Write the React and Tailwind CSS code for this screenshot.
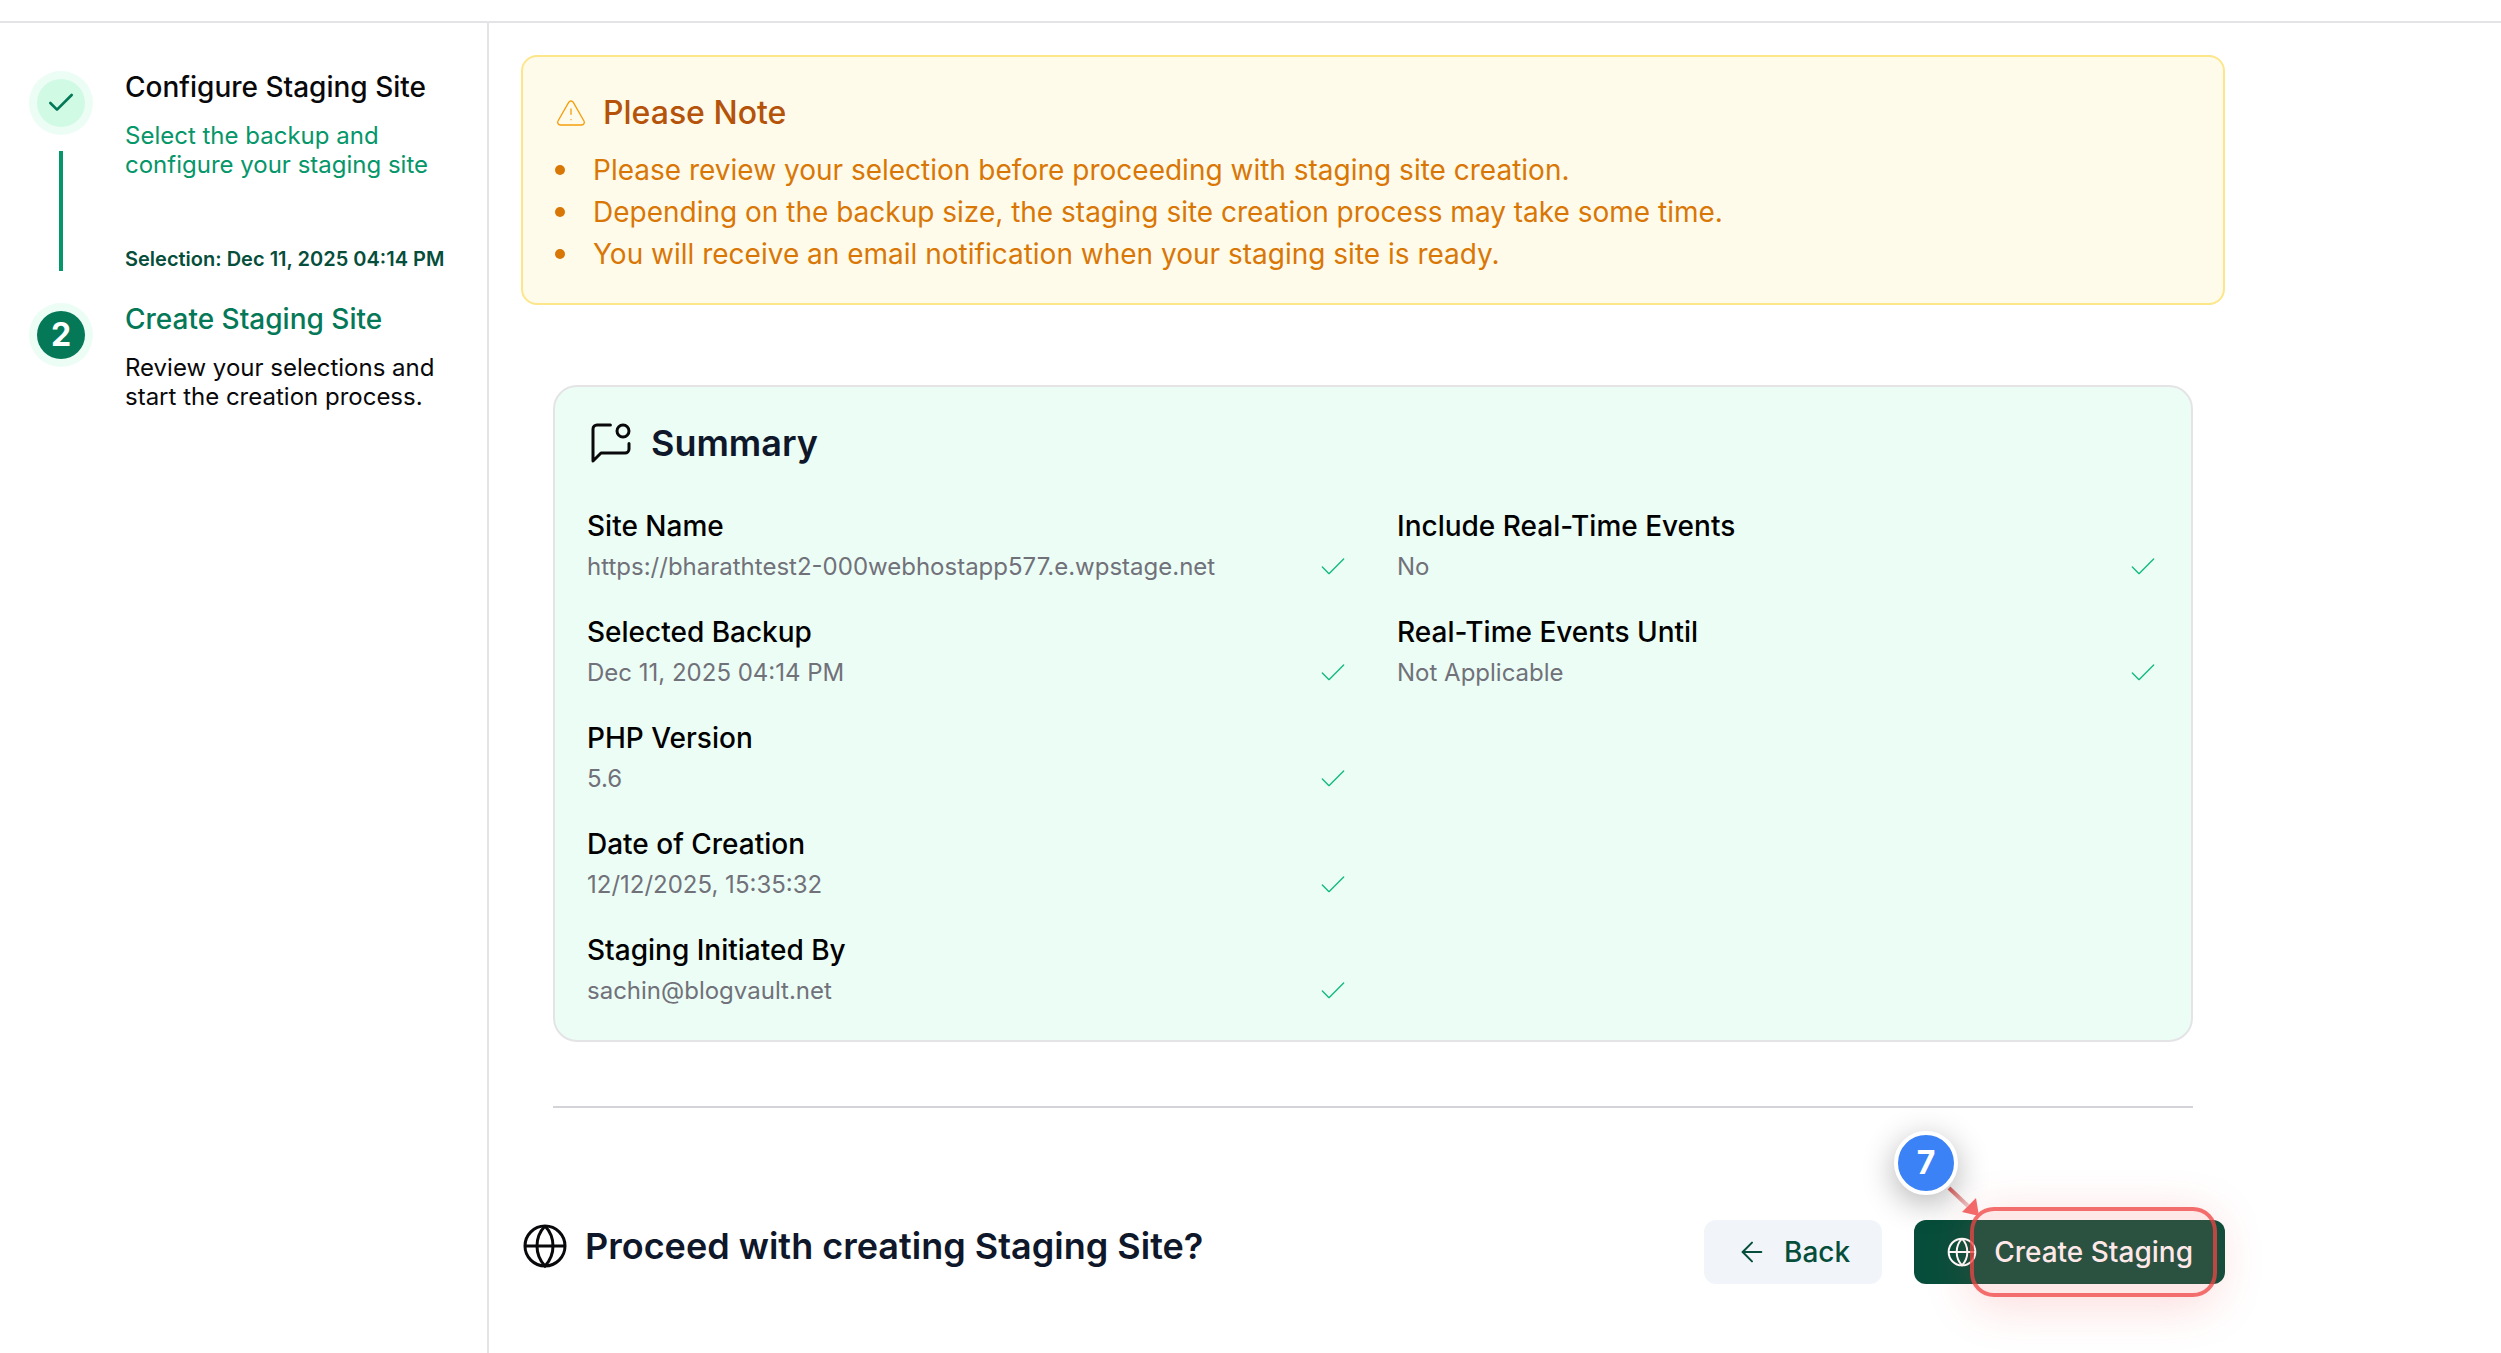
import { ArrowLeft, Check, TriangleAlert } from 'lucide-react';

const notes = [
  'Please review your selection before proceeding with staging site creation.',
  'Depending on the backup size, the staging site creation process may take some time.',
  'You will receive an email notification when your staging site is ready.',
];

const siteDetails = [
  { label: 'Site Name', value: 'https://bharathtest2-000webhostapp577.e.wpstage.net' },
  { label: 'Selected Backup', value: 'Dec 11, 2025 04:14 PM' },
  { label: 'PHP Version', value: '5.6' },
  { label: 'Date of Creation', value: '12/12/2025, 15:35:32' },
  { label: 'Staging Initiated By', value: 'sachin@blogvault.net' },
];

const eventDetails = [
  { label: 'Include Real-Time Events', value: 'No' },
  { label: 'Real-Time Events Until', value: 'Not Applicable' },
];

// Globe with meridians that meet at the poles
function GlobeIcon({ className }) {
  return (
    <svg viewBox="0 0 24 24" fill="none" stroke="currentColor" strokeWidth="1.5" className={className} aria-hidden="true">
      <circle cx="12" cy="12" r="10" />
      <path d="M12 2a14.5 14.5 0 0 0 0 20 14.5 14.5 0 0 0 0-20" />
      <path d="M2 12h20" />
    </svg>
  );
}

function MessageDotIcon({ className }) {
  return (
    <svg
      viewBox="0 0 24 24"
      fill="none"
      stroke="currentColor"
      strokeWidth="1.5"
      strokeLinecap="round"
      strokeLinejoin="round"
      className={className}
      aria-hidden="true"
    >
      <path d="M11.7 3H5a2 2 0 0 0-2 2v16l4-4h12a2 2 0 0 0 2-2v-2.7" />
      <circle cx="18" cy="6" r="3" />
    </svg>
  );
}

function Stepper() {
  return (
    <ol>
      <li className="flex gap-8">
        <div className="flex flex-col items-center gap-4">
          <div className="mt-4 flex size-16 items-center justify-center rounded-full bg-emerald-50">
            <div className="flex size-12 items-center justify-center rounded-full bg-[#d1fae5] text-[#047857]">
              <Check className="size-8" strokeWidth={2} />
            </div>
          </div>
          <div className="h-[120px] w-1 bg-[#059669]" />
        </div>
        <div className="flex flex-col">
          <h2 className="mt-3 text-[28px] leading-10 font-medium text-zinc-950">Configure Staging Site</h2>
          <p className="mt-[14px] text-2xl leading-[29px] text-[#059669]">
            Select the backup and
            <br />
            configure your staging site
          </p>
          <p className="mt-auto text-xl leading-6 font-semibold text-[#064e3b]">Selection: Dec 11, 2025 04:14 PM</p>
        </div>
      </li>
      <li className="mt-4 flex gap-8">
        <div className="mt-4 flex size-16 shrink-0 items-center justify-center rounded-full bg-emerald-50">
          <div className="flex size-12 items-center justify-center rounded-full bg-[#047857] text-[32px] leading-none font-bold text-white">
            2
          </div>
        </div>
        <div>
          <h2 className="mt-3 text-[28px] leading-10 font-medium text-[#047857]">Create Staging Site</h2>
          <p className="mt-[14px] text-2xl leading-[29px] text-zinc-950">
            Review your selections and
            <br />
            start the creation process.
          </p>
        </div>
      </li>
    </ol>
  );
}

function NoteAlert() {
  return (
    <section className="rounded-2xl border-2 border-[#fde68a] bg-[#fffbeb] px-8 pt-8 pb-7">
      <div className="flex items-center gap-4">
        <TriangleAlert className="size-8 text-[#f59e0b]" strokeWidth={1} />
        <h2 className="text-[32px] leading-[48px] font-medium text-[#b45309]">Please Note</h2>
      </div>
      <ul className="mt-3 text-[28px] leading-[42px] text-[#d97706]">
        {notes.map((note) => (
          <li key={note} className="flex items-center gap-7">
            <span className="size-[10px] rounded-full bg-[#d97706]" />
            {note}
          </li>
        ))}
      </ul>
    </section>
  );
}

function DetailList({ items }) {
  return (
    <dl className="flex-1 space-y-6">
      {items.map(({ label, value }) => (
        <div key={label}>
          <dt className="text-[28px] leading-[42px] font-medium text-black">{label}</dt>
          <dd className="flex items-center justify-between text-2xl leading-10 text-[#71717a]">
            {value}
            <Check className="size-8 text-[#10b981]" strokeWidth={1} />
          </dd>
        </div>
      ))}
    </dl>
  );
}

function SummaryCard() {
  return (
    <section className="rounded-3xl border-2 border-[#e4e4e7] bg-emerald-50 px-8 pt-8 pb-[29px]">
      <div className="flex items-center gap-4">
        <MessageDotIcon className="size-12 text-zinc-950" />
        <h2 className="text-4xl leading-[48px] font-semibold text-[#0f172a]">Summary</h2>
      </div>
      <div className="mt-[38px] flex gap-12">
        <DetailList items={siteDetails} />
        <DetailList items={eventDetails} />
      </div>
    </section>
  );
}

// Walkthrough marker drawn over the primary action
function StepMarker() {
  return (
    <div className="pointer-events-none absolute -top-[13px] right-2 h-[90px] w-[247px] rounded-3xl border-4 border-[#ef4444]/75 bg-[#ff6464]/15 shadow-[0_8px_48px_rgba(239,68,68,0.2)]">
      <svg viewBox="0 0 40 40" className="absolute -top-7 -left-7 size-10" aria-hidden="true">
        <defs>
          <linearGradient id="marker-line" x1="3" y1="5" x2="22" y2="23" gradientUnits="userSpaceOnUse">
            <stop stopColor="#e26464" />
            <stop offset="1" stopColor="#ecc4c4" />
          </linearGradient>
        </defs>
        <path d="M3 5l19 18" stroke="url(#marker-line)" strokeWidth="4" />
        <path d="M30 15L16 29l17 4z" fill="#f56a6a" />
      </svg>
      <span className="absolute -top-20 -left-20 flex size-16 items-center justify-center rounded-full border-4 border-white bg-[#3b82f6] text-[32px] leading-none font-bold text-white shadow-[0_8px_32px_rgba(0,0,0,0.3)]">
        7
      </span>
    </div>
  );
}

export default function App() {
  return (
    <div className="flex min-h-screen flex-col bg-white font-[Inter,sans-serif]">
      <header className="h-[23px] border-b-2 border-[#e4e4e7]" />
      <div className="flex flex-1">
        <aside className="w-[489px] shrink-0 border-r-2 border-[#e4e4e7] pt-8 pl-[29px]">
          <Stepper />
        </aside>
        <main className="max-w-[1768px] flex-1 p-8">
          <NoteAlert />
          <div className="px-8 pt-20">
            <SummaryCard />
            <hr className="mt-16 border-t-2 border-[#d4d4d8]" />
          </div>
          <div className="mt-28 flex items-start justify-between">
            <div className="flex items-center gap-4">
              <GlobeIcon className="size-12 text-zinc-950" />
              <h2 className="text-4xl leading-[52px] font-semibold text-[#0f172a]">Proceed with creating Staging Site?</h2>
            </div>
            <div className="flex gap-8">
              <button className="flex h-16 items-center gap-4 rounded-xl bg-[#f1f5f9] px-8 text-[28px] font-medium text-[#064e3b]">
                <ArrowLeft className="size-8" strokeWidth={1.5} />
                Back
              </button>
              <div className="relative">
                <button className="flex h-16 items-center gap-4 rounded-xl bg-[#064e3b] px-8 text-[28px] font-medium text-white">
                  <GlobeIcon className="size-8" />
                  Create Staging
                </button>
                <StepMarker />
              </div>
            </div>
          </div>
        </main>
      </div>
    </div>
  );
}
